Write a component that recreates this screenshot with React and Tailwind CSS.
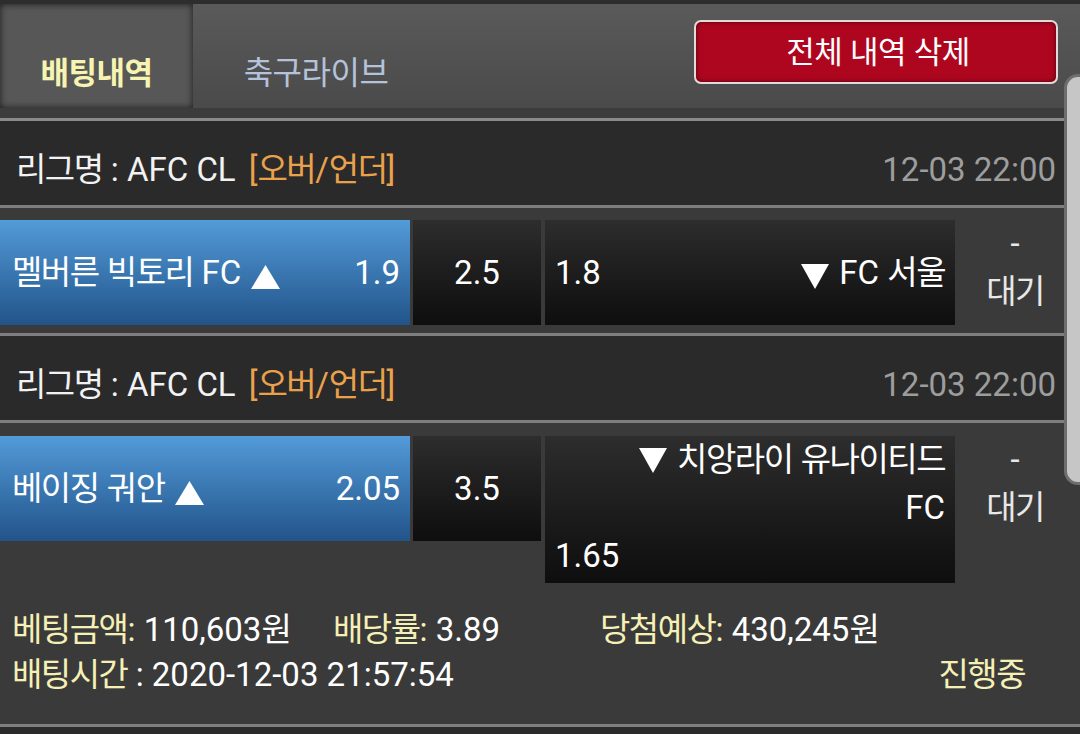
import React from 'react';

function T({ s, t = 'tracking-[-1.5px]' }) {
  const parts = s.split(/([\uAC00-\uD7A3]+)/);
  return (
    <span>
      {parts.map((p, i) =>
        /[\uAC00-\uD7A3]/.test(p) ? (
          <span key={i} className={t}>{p}</span>
        ) : (
          <React.Fragment key={i}>{p}</React.Fragment>
        )
      )}
    </span>
  );
}

const Up = () => (
  <svg width="29" height="24" viewBox="0 0 29 24" className="inline-block">
    <path d="M14.5 0 L29 24 L0 24 Z" fill="white" />
  </svg>
);
const Down = () => (
  <svg width="28" height="25" viewBox="0 0 28 25" className="inline-block">
    <path d="M0 0 L28 0 L14 25 Z" fill="white" />
  </svg>
);

const blue = 'bg-gradient-to-b from-[#539bd9] to-[#22548a]';
const black = 'bg-gradient-to-b from-[#2d2d2d] to-[#0e0e0e]';

function League() {
  return (
    <div className="h-[84px] bg-[#2a2a2a] flex items-center justify-between pt-[12px] pl-[16px] pr-[24px]">
      <div className="flex items-center">
        <span className="text-[#f2f2f2]"><T s="리그명 : AFC CL" /></span>
        <span className="ml-[13px] text-[#eaa14c]"><T s="[오버/언더]" /></span>
      </div>
      <span className="text-[#9d9d9d]">12-03 22:00</span>
    </div>
  );
}

function Status() {
  return (
    <div className="w-[120px] flex flex-col items-center text-[#e8e8e8] leading-[48px]">
      <span>-</span>
      <T s="대기" />
    </div>
  );
}

const Line = ({ c = 'bg-[#7e7e7e]' }) => <div className={`h-[3px] ${c}`} />;

export default function App() {
  return (
    <div className="relative w-[1080px] h-[734px] overflow-hidden bg-[#2a2a2a] text-[33px] leading-none font-[family-name:Roboto,'Noto_Sans_CJK_KR',sans-serif]">
      {/* header */}
      <div className="border-t-[4px] border-[#2d2d2d] h-[108px] flex bg-gradient-to-b from-[#5a5a5a] to-[#4a4a4a] text-[31px]">
        <div className="w-[193px] h-full flex items-center justify-center pt-[34px] bg-[#575757] shadow-[inset_0_0_7px_rgba(0,0,0,0.7)] font-bold text-[#f7f4b2]">
          <T s="배팅내역" t="tracking-[-0.5px]" />
        </div>
        <div className="w-[246px] h-full flex items-center justify-center pt-[34px] text-[32px] text-[#b4c2da]">
          <T s="축구라이브" t="tracking-[-0.5px]" />
        </div>
        <div className="ml-auto mr-[22px] mt-[16px] w-[364px] h-[64px] rounded-[7px] border-2 border-[#e2dada] bg-[#af0620] shadow-[inset_0_0_5px_rgba(0,0,0,0.55)] flex items-center justify-center text-white pl-[4px]">
          <T s="전체 내역 삭제" t="tracking-[-0.5px]" />
        </div>
      </div>
      <div className="h-[10px] bg-[#3c3c3c]" />
      <Line c="bg-[#8a8a8a]" />

      {/* section 1 */}
      <League />
      <Line />
      <div className="flex items-start bg-[#3a3a3a] pt-[12px] pb-[8px]">
        <div className={`w-[410px] h-[105px] flex items-center justify-between pl-[12px] pr-[10px] ${blue} text-white`}>
          <span className="flex items-end gap-[10px]"><T s="멜버른 빅토리 FC" /><Up /></span>
          <span>1.9</span>
        </div>
        <div className={`ml-[3px] w-[128px] h-[105px] flex items-center justify-center ${black} text-white`}>2.5</div>
        <div className={`ml-[4px] w-[410px] h-[105px] flex items-center justify-between pl-[10px] pr-[10px] ${black} text-white`}>
          <span>1.8</span>
          <span className="flex items-end gap-[10px]"><Down /><T s="FC 서울" /></span>
        </div>
        <Status />
      </div>
      <Line />

      {/* section 2 */}
      <League />
      <Line />
      <div className="bg-[#3a3a3a]">
        <div className="flex items-start pt-[13px]">
          <div className={`w-[410px] h-[105px] flex items-center justify-between pl-[12px] pr-[10px] ${blue} text-white`}>
            <span className="flex items-end gap-[10px]"><T s="베이징 궈안" /><Up /></span>
            <span>2.05</span>
          </div>
          <div className={`ml-[3px] w-[128px] h-[105px] flex items-center justify-center ${black} text-white`}>3.5</div>
          <div className={`ml-[4px] w-[410px] h-[147px] flex flex-col pl-[10px] pr-[10px] ${black} text-white leading-[48px]`}>
            <div className="flex justify-end items-center gap-[10px]"><Down /><T s="치앙라이 유나이티드" /></div>
            <div className="text-right">FC</div>
            <div>1.65</div>
          </div>
          <Status />
        </div>
        <div className="pt-[24px] pb-[27px] pl-[12px] leading-[45px]">
          <div className="flex">
            <div className="w-[321px]">
              <span className="text-[#f5f0b6]"><T s="베팅금액:" /></span>
              <span className="text-white"> <T s="110,603원" /></span>
            </div>
            <div className="w-[267px]">
              <span className="text-[#f5f0b6]"><T s="배당률:" /></span>
              <span className="text-white"> 3.89</span>
            </div>
            <div>
              <span className="text-[#f5f0b6]"><T s="당첨예상:" /></span>
              <span className="text-white"> <T s="430,245원" /></span>
            </div>
          </div>
          <div className="flex justify-between pr-[55px]">
            <div>
              <span className="text-[#f5f0b6]"><T s="배팅시간" /></span>
              <span className="text-white"> : 2020-12-03 21:57:54</span>
            </div>
            <span className="text-[#f5f0b6]"><T s="진행중" /></span>
          </div>
        </div>
      </div>
      <Line />

      {/* scrollbar overlay */}
      <div className="absolute right-0 top-[74px] w-[16px] h-[411px] rounded-l-[14px] bg-[#c6c6c6] border-l-[3px] border-y-[3px] border-[#6e6e6e]" />
    </div>
  );
}
